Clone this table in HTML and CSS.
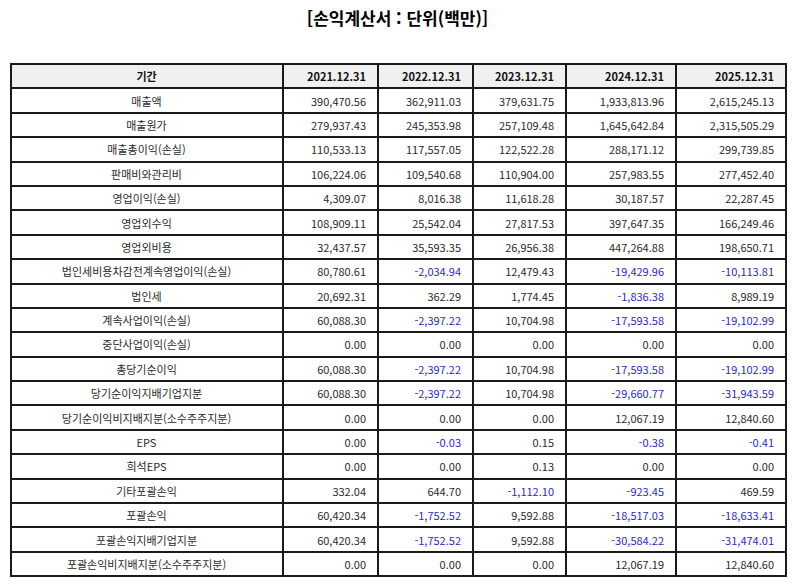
FILE: index.html
```html
<!DOCTYPE html>
<html lang="ko">
<head>
<meta charset="utf-8">
<title>손익계산서</title>
<link rel="stylesheet" href="styles.css">
</head>
<body>
<h1 class="title">[손익계산서 : 단위(백만)]</h1>
<table class="fin">
  <colgroup>
    <col class="c-label"><col class="c-a"><col class="c-a"><col class="c-b"><col class="c-c"><col class="c-c">
  </colgroup>
  <thead>
    <tr><th>기간</th><th class="num">2021.12.31</th><th class="num">2022.12.31</th><th class="num">2023.12.31</th><th class="num">2024.12.31</th><th class="num">2025.12.31</th></tr>
  </thead>
  <tbody>
    <tr><td>매출액</td><td>390,470.56</td><td>362,911.03</td><td>379,631.75</td><td>1,933,813.96</td><td>2,615,245.13</td></tr>
    <tr><td>매출원가</td><td>279,937.43</td><td>245,353.98</td><td>257,109.48</td><td>1,645,642.84</td><td>2,315,505.29</td></tr>
    <tr><td>매출총이익(손실)</td><td>110,533.13</td><td>117,557.05</td><td>122,522.28</td><td>288,171.12</td><td>299,739.85</td></tr>
    <tr><td>판매비와관리비</td><td>106,224.06</td><td>109,540.68</td><td>110,904.00</td><td>257,983.55</td><td>277,452.40</td></tr>
    <tr><td>영업이익(손실)</td><td>4,309.07</td><td>8,016.38</td><td>11,618.28</td><td>30,187.57</td><td>22,287.45</td></tr>
    <tr><td>영업외수익</td><td>108,909.11</td><td>25,542.04</td><td>27,817.53</td><td>397,647.35</td><td>166,249.46</td></tr>
    <tr><td>영업외비용</td><td>32,437.57</td><td>35,593.35</td><td>26,956.38</td><td>447,264.88</td><td>198,650.71</td></tr>
    <tr><td>법인세비용차감전계속영업이익(손실)</td><td>80,780.61</td><td class="neg">-2,034.94</td><td>12,479.43</td><td class="neg">-19,429.96</td><td class="neg">-10,113.81</td></tr>
    <tr><td>법인세</td><td>20,692.31</td><td>362.29</td><td>1,774.45</td><td class="neg">-1,836.38</td><td>8,989.19</td></tr>
    <tr><td>계속사업이익(손실)</td><td>60,088.30</td><td class="neg">-2,397.22</td><td>10,704.98</td><td class="neg">-17,593.58</td><td class="neg">-19,102.99</td></tr>
    <tr><td>중단사업이익(손실)</td><td>0.00</td><td>0.00</td><td>0.00</td><td>0.00</td><td>0.00</td></tr>
    <tr><td>총당기순이익</td><td>60,088.30</td><td class="neg">-2,397.22</td><td>10,704.98</td><td class="neg">-17,593.58</td><td class="neg">-19,102.99</td></tr>
    <tr><td>당기순이익지배기업지분</td><td>60,088.30</td><td class="neg">-2,397.22</td><td>10,704.98</td><td class="neg">-29,660.77</td><td class="neg">-31,943.59</td></tr>
    <tr><td>당기순이익비지배지분(소수주주지분)</td><td>0.00</td><td>0.00</td><td>0.00</td><td>12,067.19</td><td>12,840.60</td></tr>
    <tr><td>EPS</td><td>0.00</td><td class="neg">-0.03</td><td>0.15</td><td class="neg">-0.38</td><td class="neg">-0.41</td></tr>
    <tr><td>희석EPS</td><td>0.00</td><td>0.00</td><td>0.13</td><td>0.00</td><td>0.00</td></tr>
    <tr><td>기타포괄손익</td><td>332.04</td><td>644.70</td><td class="neg">-1,112.10</td><td class="neg">-923.45</td><td>469.59</td></tr>
    <tr><td>포괄손익</td><td>60,420.34</td><td class="neg">-1,752.52</td><td>9,592.88</td><td class="neg">-18,517.03</td><td class="neg">-18,633.41</td></tr>
    <tr><td>포괄손익지배기업지분</td><td>60,420.34</td><td class="neg">-1,752.52</td><td>9,592.88</td><td class="neg">-30,584.22</td><td class="neg">-31,474.01</td></tr>
    <tr><td>포괄손익비지배지분(소수주주지분)</td><td>0.00</td><td>0.00</td><td>0.00</td><td>12,067.19</td><td>12,840.60</td></tr>
  </tbody>
</table>
</body>
</html>
```

FILE: styles.css
```css
html, body {
  margin: 0;
  padding: 0;
  background: #fff;
}
body {
  font-family: "Noto Sans CJK KR", "Noto Sans", sans-serif;
  color: #222;
  padding: 0 9px 0 10px;
}
.title {
  margin: 0;
  padding-top: 6px;
  height: 63px;
  box-sizing: border-box;
  text-align: center;
  font-size: 17px;
  font-weight: bold;
  color: #000;
  line-height: 24px;
}
.fin {
  width: 776px;
  border-collapse: collapse;
  table-layout: fixed;
  font-size: 11px;
}
.c-label { width: 272px; }
.c-a { width: 95px; }
.c-b { width: 93px; }
.c-c { width: 110px; }
.fin th, .fin td {
  border: 2px solid #1a1a1a;
  height: 24.4px;
  padding: 0 11px 0 10px;
  box-sizing: border-box;
  line-height: 14px;
  white-space: nowrap;
}
.fin th {
  background: #f0f0f0;
  font-weight: bold;
  text-align: center;
  color: #111;
}
.fin th.num {
  text-align: right;
}
.fin td {
  text-align: right;
  color: #2a2a2a;
}
.fin td:first-child {
  text-align: center;
}
.fin td.neg {
  color: #2a2acc;
}
```
